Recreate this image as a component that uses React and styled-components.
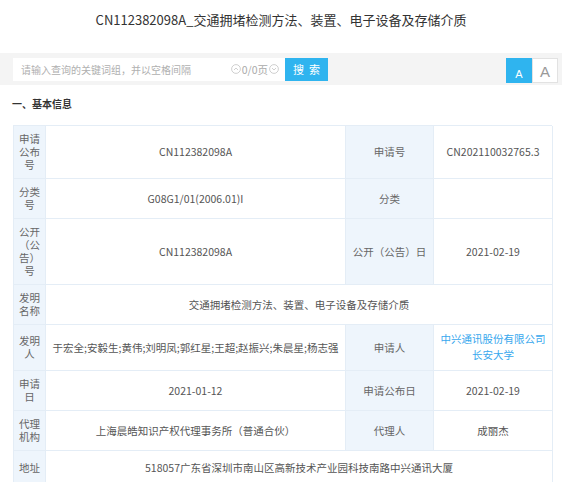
import React from "react";
import styled, { createGlobalStyle } from "styled-components";

const Global = createGlobalStyle`
  html, body { margin: 0; padding: 0; background: #fff; }
  body { font-family: "Noto Sans CJK SC", "Noto Sans", sans-serif; color: #333; }
  * { box-sizing: border-box; }
`;

const Page = styled.div`
  width: 562px;
  height: 482px;
  overflow: hidden;
`;

const Title = styled.h1`
  margin: 0;
  height: 53px;
  padding-top: 10px;
  font-size: 13px;
  font-weight: normal;
  line-height: 20px;
  text-align: center;
  color: #333;
`;

const SearchStrip = styled.div`
  display: flex;
  align-items: center;
  height: 32px;
  background: #f4f4f4;
  padding: 0 4px 0 13px;
`;

const InputBox = styled.div`
  display: flex;
  align-items: center;
  width: 272px;
  height: 23px;
  background: #fff;
  padding: 0 6px 0 8px;
`;

const Placeholder = styled.span`
  flex: 1;
  font-size: 10px;
  color: #b0b0b0;
  white-space: nowrap;
`;

const Pager = styled.span`
  display: flex;
  align-items: center;
  gap: 1px;
  font-size: 10.5px;
  color: #aaa;
`;

const SearchButton = styled.button`
  width: 43px;
  height: 23px;
  border: none;
  background: #2fb4ef;
  color: #fff;
  font-family: inherit;
  font-size: 11px;
  letter-spacing: 5px;
  padding: 0 0 0 5px;
`;

const Spacer = styled.div`
  flex: 1;
`;

const SizeButton = styled.button`
  width: 26px;
  height: 25px;
  margin-top: 3px;
  border: 1px solid ${(p) => (p.$active ? "#2fb4ef" : "#e2e2e2")};
  background: ${(p) => (p.$active ? "#2fb4ef" : "#fff")};
  color: ${(p) => (p.$active ? "#fff" : "#999")};
  font-family: "Liberation Sans", sans-serif;
  font-size: ${(p) => (p.$active ? "11px" : "15px")};
  padding: ${(p) => (p.$active ? "7px 0 0" : "2px 0 0")};
  line-height: 1;
`;

const Section = styled.h2`
  margin: 0;
  padding: 12px 0 0 12px;
  height: 40px;
  font-size: 10px;
  font-weight: bold;
  line-height: 14px;
  color: #333;
`;

const Grid = styled.div`
  margin-left: 13px;
  width: 539px;
  display: grid;
  grid-template-columns: 32px 300px 88px 119px;
  border-top: 1px solid #e4edf6;
  border-left: 1px solid #e4edf6;
`;

const Cell = styled.div`
  display: flex;
  align-items: center;
  justify-content: center;
  text-align: center;
  min-height: 34px;
  padding: 6px 2px 7px;
  font-size: 10.5px;
  line-height: 13px;
  border-right: 1px solid #e4edf6;
  border-bottom: 1px solid #e4edf6;
  background: ${(p) => (p.$label ? "#eef5fc" : "#fff")};
  color: ${(p) => (p.$link ? "#37a8ee" : p.$label ? "#666" : "#555")};
  grid-column: ${(p) => (p.$span ? `span ${p.$span}` : "auto")};
  word-break: break-all;
`;

const LinkList = styled.div`
  display: flex;
  flex-direction: column;
  line-height: 16px;
`;

const CircleIcon = ({ up }) => (
  <svg width="10" height="10" viewBox="0 0 10 10">
    <circle cx="5" cy="5" r="4.4" fill="none" stroke="#c4c4c4" strokeWidth="0.8" />
    <path
      d={up ? "M3 6 L5 4 L7 6" : "M3 4 L5 6 L7 4"}
      fill="none"
      stroke="#c4c4c4"
      strokeWidth="0.8"
    />
  </svg>
);

export default function App() {
  return (
    <Page>
      <Global />
      <Title>CN112382098A_交通拥堵检测方法、装置、电子设备及存储介质</Title>
      <SearchStrip>
        <InputBox>
          <Placeholder>请输入查询的关键词组，并以空格间隔</Placeholder>
          <Pager>
            <CircleIcon up />
            0/0页
            <CircleIcon />
          </Pager>
        </InputBox>
        <SearchButton>搜索</SearchButton>
        <Spacer />
        <SizeButton $active>A</SizeButton>
        <SizeButton>A</SizeButton>
      </SearchStrip>
      <Section>一、基本信息</Section>
      <Grid>
        <Cell $label>申请公布号</Cell>
        <Cell>CN112382098A</Cell>
        <Cell $label>申请号</Cell>
        <Cell>CN202110032765.3</Cell>

        <Cell $label>分类号</Cell>
        <Cell>G08G1/01(2006.01)I</Cell>
        <Cell $label>分类</Cell>
        <Cell></Cell>

        <Cell $label>公开（公告）号</Cell>
        <Cell>CN112382098A</Cell>
        <Cell $label>公开（公告）日</Cell>
        <Cell>2021-02-19</Cell>

        <Cell $label>发明名称</Cell>
        <Cell $span={3}>交通拥堵检测方法、装置、电子设备及存储介质</Cell>

        <Cell $label>发明人</Cell>
        <Cell>于宏全;安毅生;黄伟;刘明凤;郭红星;王超;赵振兴;朱晨星;杨志强</Cell>
        <Cell $label>申请人</Cell>
        <Cell $link>
          <LinkList>
            <span>中兴通讯股份有限公司</span>
            <span>长安大学</span>
          </LinkList>
        </Cell>

        <Cell $label>申请日</Cell>
        <Cell>2021-01-12</Cell>
        <Cell $label>申请公布日</Cell>
        <Cell>2021-02-19</Cell>

        <Cell $label>代理机构</Cell>
        <Cell>上海晨皓知识产权代理事务所（普通合伙）</Cell>
        <Cell $label>代理人</Cell>
        <Cell>成丽杰</Cell>

        <Cell $label>地址</Cell>
        <Cell $span={3}>518057广东省深圳市南山区高新技术产业园科技南路中兴通讯大厦</Cell>

        <Cell $label></Cell>
        <Cell $span={3}></Cell>
      </Grid>
    </Page>
  );
}
